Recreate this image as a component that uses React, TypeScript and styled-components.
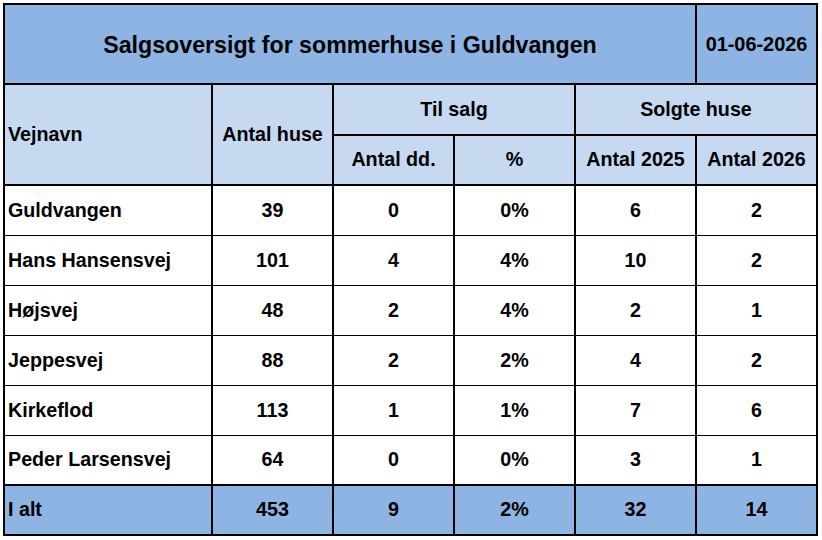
import React from "react";
import styled, { createGlobalStyle } from "styled-components";

const GlobalStyle = createGlobalStyle`
  html, body {
    margin: 0;
    padding: 0;
    background: #ffffff;
  }
  body {
    font-family: "Liberation Sans", Arial, sans-serif;
    color: #000;
  }
`;

const TITLE_BG = "#8db4e2";
const HEAD_BG = "#c6d9f1";

const Page = styled.div`
  padding: 3px 0 0 3px;
`;

const Sheet = styled.div`
  width: 815px;
  box-sizing: border-box;
  display: flex;
  flex-direction: column;
  gap: 2px;
  padding: 2px;
  background: #000;
`;

const Band = styled.div<{ $rows: string; $rowGap?: number }>`
  display: grid;
  grid-template-columns: 206px repeat(5, 119px);
  grid-template-rows: ${(p) => p.$rows};
  column-gap: 2px;
  row-gap: ${(p) => p.$rowGap ?? 2}px;
`;

const Cell = styled.div<{
  $bg?: string;
  $align?: "left" | "center";
  $colSpan?: number;
  $rowSpan?: number;
  $size?: number;
  $padTop?: number;
}>`
  background: ${(p) => p.$bg ?? "#fff"};
  display: flex;
  align-items: center;
  justify-content: ${(p) => (p.$align === "left" ? "flex-start" : "center")};
  padding: ${(p) => p.$padTop ?? 0}px 0 0 ${(p) => (p.$align === "left" ? 3 : 0)}px;
  box-sizing: border-box;
  font-weight: 700;
  font-size: ${(p) => p.$size ?? 19.7}px;
  line-height: 1;
  white-space: nowrap;
  ${(p) => (p.$colSpan ? `grid-column: span ${p.$colSpan};` : "")}
  ${(p) => (p.$rowSpan ? `grid-row: span ${p.$rowSpan};` : "")}
`;

type Row = {
  name: string;
  houses: number;
  forSale: number;
  pct: string;
  sold25: number;
  sold26: number;
};

const rows: Row[] = [
  { name: "Guldvangen", houses: 39, forSale: 0, pct: "0%", sold25: 6, sold26: 2 },
  { name: "Hans Hansensvej", houses: 101, forSale: 4, pct: "4%", sold25: 10, sold26: 2 },
  { name: "Højsvej", houses: 48, forSale: 2, pct: "4%", sold25: 2, sold26: 1 },
  { name: "Jeppesvej", houses: 88, forSale: 2, pct: "2%", sold25: 4, sold26: 2 },
  { name: "Kirkeflod", houses: 113, forSale: 1, pct: "1%", sold25: 7, sold26: 6 },
  { name: "Peder Larsensvej", houses: 64, forSale: 0, pct: "0%", sold25: 3, sold26: 1 },
];

const total: Row = { name: "I alt", houses: 453, forSale: 9, pct: "2%", sold25: 32, sold26: 14 };

const DataCells: React.FC<{ row: Row; bg?: string }> = ({ row, bg }) => (
  <>
    <Cell $align="left" $bg={bg}>{row.name}</Cell>
    <Cell $bg={bg}>{row.houses}</Cell>
    <Cell $bg={bg}>{row.forSale}</Cell>
    <Cell $bg={bg}>{row.pct}</Cell>
    <Cell $bg={bg}>{row.sold25}</Cell>
    <Cell $bg={bg}>{row.sold26}</Cell>
  </>
);

export default function App() {
  return (
    <>
      <GlobalStyle />
      <Page>
        <Sheet>
          <Band $rows="78px">
            <Cell $bg={TITLE_BG} $colSpan={5} $size={23.2} $padTop={3}>
              Salgsoversigt for sommerhuse i Guldvangen
            </Cell>
            <Cell $bg={TITLE_BG} $size={19.9} $padTop={1}>
              01-06-2026
            </Cell>
          </Band>
          <Band $rows="49px 48px">
            <Cell $bg={HEAD_BG} $align="left" $rowSpan={2}>Vejnavn</Cell>
            <Cell $bg={HEAD_BG} $rowSpan={2}>Antal huse</Cell>
            <Cell $bg={HEAD_BG} $colSpan={2}>Til salg</Cell>
            <Cell $bg={HEAD_BG} $colSpan={2}>Solgte huse</Cell>
            <Cell $bg={HEAD_BG}>Antal dd.</Cell>
            <Cell $bg={HEAD_BG}>%</Cell>
            <Cell $bg={HEAD_BG}>Antal 2025</Cell>
            <Cell $bg={HEAD_BG}>Antal 2026</Cell>
          </Band>
          <Band $rows="repeat(5, 49px) 48px" $rowGap={1}>
            {rows.map((r) => (
              <DataCells key={r.name} row={r} />
            ))}
          </Band>
          <Band $rows="48px">
            <DataCells row={total} bg={TITLE_BG} />
          </Band>
        </Sheet>
      </Page>
    </>
  );
}
